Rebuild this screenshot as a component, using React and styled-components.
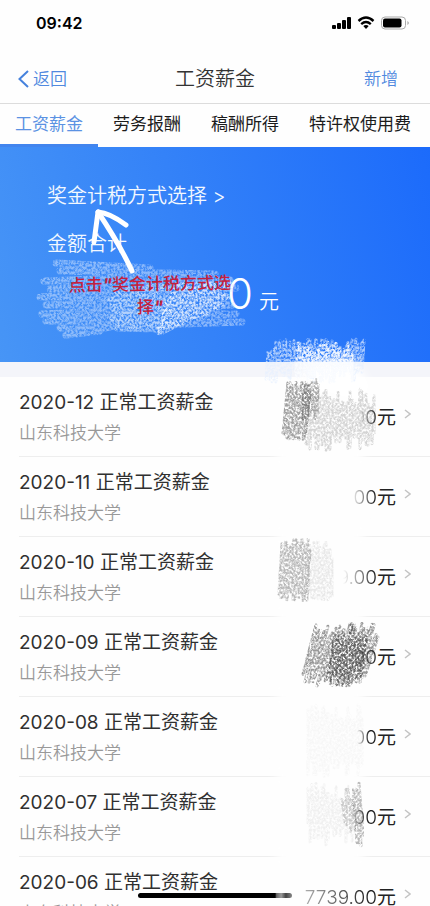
import React from 'react';
import styled, { createGlobalStyle } from 'styled-components';

const GlobalStyle = createGlobalStyle`
  * {
    box-sizing: border-box;
  }

  body {
    margin: 0;
    background: #fefefe;
    color: #333;
    font-family: Inter, 'Noto Sans CJK SC', sans-serif;
  }

  button {
    padding: 0;
    border: 0;
    background: none;
    color: inherit;
    font: inherit;
    cursor: pointer;
  }
`;

const Page = styled.div`
  position: relative;
  display: flex;
  flex-direction: column;
  height: 100vh;
  overflow: hidden;
`;

/* Top bars */
const StatusBar = styled.div`
  display: flex;
  flex: none;
  align-items: center;
  justify-content: space-between;
  height: 46px;
  padding: 0 20px 0 36px;
  color: #000;
  font-size: 16px;
  font-weight: 600;

  svg {
    display: block;
  }
`;

const NavBar = styled.header`
  display: grid;
  flex: none;
  grid-template-columns: 1fr auto 1fr;
  align-items: center;
  height: 58px;
  padding: 8px 18px 0;
  border-bottom: 1px solid #dcdcdc;

  h1 {
    margin: 0;
    font-size: 20px;
    font-weight: 350;
    line-height: 24px;
  }
`;

const NavButton = styled.button`
  display: flex;
  align-items: center;
  gap: 4px;
  justify-self: ${({ $end }) => ($end ? 'end' : 'start')};
  margin-right: ${({ $end }) => ($end ? '14px' : '0')};
  color: #5089df;
  font-size: 17px;
  font-weight: 350;
  line-height: 24px;
`;

const Tabs = styled.nav`
  display: flex;
  flex: none;
  height: 43px;
`;

const Tab = styled.button`
  flex: none;
  padding: 0 15px;
  border-bottom: 3px solid ${({ $active }) => ($active ? '#4285ee' : 'transparent')};
  color: ${({ $active }) => ($active ? '#5b92e3' : '#1c1c1c')};
  font-size: 17px;
  line-height: 40px;
`;

const Content = styled.main`
  flex: 1;
  min-height: 0;
  overflow-y: auto;
  scrollbar-width: none;
`;

/* Banner */
const Banner = styled.section`
  position: relative;
  height: 215px;
  padding: 37px 47px 0;
  background: linear-gradient(75deg, #4795f6 0%, #3482f8 45%, #1c6bfb 100%);
  color: #f2f8ff;
  font-size: 20px;
  font-weight: 350;
  line-height: 24px;
`;

const MethodButton = styled.button`
  display: block;
`;

const TotalLabel = styled.div`
  margin-top: 24px;
`;

const Total = styled.div`
  display: flex;
  align-items: baseline;
  gap: 6px;
  padding-left: 180px;
  margin-top: 14px;
  color: #fff;
  line-height: 48px;

  strong {
    font-size: 42px;
    font-weight: 350;
  }
`;

const Note = styled.p`
  position: absolute;
  top: 126px;
  left: 60px;
  width: 180px;
  margin: 0;
  color: #c41f3e;
  font-size: 17px;
  font-weight: 500;
  line-height: 23px;
  text-align: center;
  transform: rotate(-1deg);

  i {
    font-weight: 700;
  }
`;

const BannerDrawing = styled.svg`
  position: absolute;
  top: 0;
  left: 0;
  width: 300px;
  height: 215px;
`;

/* List */
const List = styled.ul`
  margin: 0;
  padding: 0;
  border-top: 15px solid #f4f5fa;
  list-style: none;
`;

const Row = styled.li`
  position: relative;
  height: 80px;
  padding: 0 19px;

  &::after {
    content: '';
    display: block;
    height: 1px;
    margin-right: -19px;
    background: #eee;
  }
`;

const RowLink = styled.a`
  display: flex;
  align-items: center;
  justify-content: space-between;
  height: 79px;
  padding-top: 2px;
  color: inherit;
  text-decoration: none;
`;

const RowTitle = styled.div`
  color: #303030;
  font-size: 19px;
  line-height: 30px;
`;

const Employer = styled.div`
  color: #999;
  font-size: 17px;
  font-weight: 350;
  line-height: 30px;
`;

const Amount = styled.div`
  position: relative;
  z-index: 1;
  display: flex;
  align-items: center;
  gap: 8px;
  color: #222;
  font-size: 19px;
  line-height: 24px;

  svg {
    margin-bottom: 8px;
  }
`;

const Digits = styled.span`
  font-weight: 300;
  mask-image: linear-gradient(
    to left,
    #000 ${({ $solid }) => $solid}px,
    transparent ${({ $clear }) => $clear}px
  );
`;

const RowDrawing = styled.svg`
  position: absolute;
  top: 0;
  right: 0;
  width: 170px;
  height: 80px;
  overflow: visible;
  pointer-events: none;
`;

const HomeIndicator = styled.div`
  position: absolute;
  bottom: 8px;
  left: 50%;
  z-index: 2;
  width: 154px;
  height: 5px;
  border-radius: 3px;
  background: linear-gradient(to right, #000 89%, #666 90%, #999 93%, #444 96%, #888);
  transform: translateX(-50%);
`;

// Repeatable noise between -1 and 1
const noise = n => {
  const v = Math.sin(n * 127.1 + 311.7) * 43758.5453;
  return (v - Math.floor(v)) * 2 - 1;
};

// Back and forth pencil line inside a slanted box
const hatch = ({ x0, x1, y0, y1, step = 2, slant = 0, jitter = 6 }) => {
  let d = '';
  let i = 0;
  for (let x = x0; x <= x1; x += step) {
    const a = noise(i + x0) * jitter;
    const b = noise(i * 3 + y1) * jitter;
    d += `${i ? 'L' : 'M'}${x} ${y0 + a} L${x + slant} ${y1 + b} `;
    i += 1;
  }
  return d;
};

const Hatch = ({ color, width = 3, opacity = 1, ...box }) => (
  <path
    d={hatch(box)}
    fill='none'
    stroke={color}
    strokeWidth={width}
    strokeLinecap='round'
    strokeLinejoin='round'
    opacity={opacity}
    filter='url(#grain)'
  />
);

const Filters = () => (
  <svg width='0' height='0' style={{ position: 'absolute' }} aria-hidden='true'>
    <defs>
      <filter id='grain' x='-10%' y='-20%' width='120%' height='140%'>
        <feTurbulence type='fractalNoise' baseFrequency='0.5 0.4' numOctaves='4' seed='4' result='noise' />
        <feColorMatrix in='noise' values='0 0 0 0 0  0 0 0 0 0  0 0 0 0 0  0 3 0 0 -0.9' result='holes' />
        <feComposite in='SourceGraphic' in2='holes' operator='in' />
        <feGaussianBlur stdDeviation='0.6' />
      </filter>
      <filter id='soft' x='-30%' y='-60%' width='160%' height='220%'>
        <feGaussianBlur stdDeviation='5' />
      </filter>
    </defs>
  </svg>
);

const records = [
  {
    month: '2020-12',
    digits: '00',
    solid: 0,
    clear: 18,
    marks: (
      <>
        <path d='M42 -14 L94 -18 L110 10 L100 24 L52 10Z' fill='#fff' filter='url(#soft)' />
        <Hatch x0={8} x1={104} y0={-30} y1={-2} slant={-2} jitter={8} color='#e6f0ff' opacity={0.7} />
        <Hatch x0={36} x1={92} y0={-26} y1={8} jitter={9} color='#fff' opacity={0.8} />
        <Hatch x0={28} x1={50} y0={11} y1={57} slant={-5} color='#444' opacity={0.5} />
        <Hatch x0={44} x1={58} y0={8} y1={36} slant={-1} color='#555' opacity={0.45} />
        <Hatch x0={46} x1={114} y0={22} y1={64} jitter={10} color='#888' opacity={0.35} />
      </>
    )
  },
  { month: '2020-11', digits: '00', solid: 2, clear: 26 },
  {
    month: '2020-10',
    digits: '9.00',
    solid: 2,
    clear: 34,
    marks: (
      <>
        <Hatch x0={22} x1={50} y0={8} y1={58} slant={-3} color='#777' opacity={0.5} />
        <Hatch x0={46} x1={72} y0={14} y1={54} jitter={10} color='#aaa' opacity={0.25} />
      </>
    )
  },
  {
    month: '2020-09',
    digits: '00',
    solid: 0,
    clear: 34,
    marks: (
      <>
        <Hatch x0={56} x1={118} y0={14} y1={62} slant={-13} jitter={7} color='#555' opacity={0.6} />
        <Hatch x0={76} x1={108} y0={16} y1={60} slant={-8} jitter={10} color='#222' opacity={0.45} />
      </>
    )
  },
  {
    month: '2020-08',
    digits: '00',
    solid: 8,
    clear: 20,
    marks: <Hatch x0={48} x1={102} y0={18} y1={70} jitter={10} color='#ccc' opacity={0.12} />
  },
  {
    month: '2020-07',
    digits: '00',
    solid: 10,
    clear: 26,
    marks: (
      <>
        <Hatch x0={48} x1={92} y0={18} y1={56} jitter={12} color='#bbb' opacity={0.2} />
        <Hatch x0={82} x1={92} y0={18} y1={50} slant={3} color='#999' opacity={0.45} />
        <Hatch x0={93} x1={99} y0={10} y1={64} slant={4} color='#666' opacity={0.45} />
      </>
    )
  },
  { month: '2020-06', digits: '7739.00', solid: 8, clear: 110 }
];

const tabs = ['工资薪金', '劳务报酬', '稿酬所得', '特许权使用费'];

const App = () => (
  <Page>
    <GlobalStyle />
    <Filters />
    <StatusBar>
      <span>09:42</span>
      <svg width='78' height='16' viewBox='0 0 78 16' aria-hidden='true'>
        <rect x='0' y='10' width='4' height='4' rx='1' />
        <rect x='5' y='8' width='4' height='6' rx='1' />
        <rect x='10' y='5' width='4' height='9' rx='1' />
        <rect x='15' y='2' width='4' height='12' rx='1' />
        <g fill='none' stroke='#000' strokeWidth='2.4'>
          <path d='M26.5 6 Q34 -.8 41.5 6' />
          <path d='M29.2 9.2 Q34 5 38.8 9.2' />
        </g>
        <path d='M31.3 11 Q34 8.8 36.7 11 L34 14Z' />
        <rect x='49.5' y='2' width='24' height='12' rx='3.5' fill='none' stroke='#aaa' />
        <rect x='51' y='3.5' width='18.5' height='9' rx='2' />
        <path d='M75.5 6 Q78 8 75.5 10Z' fill='#999' />
      </svg>
    </StatusBar>

    <NavBar>
      <NavButton>
        <svg width='11' height='18' viewBox='0 0 11 18' fill='none' stroke='#4682dd' strokeWidth='2'>
          <path d='M10 1 L1.5 9 L10 17' />
        </svg>
        返回
      </NavButton>
      <h1>工资薪金</h1>
      <NavButton $end>新增</NavButton>
    </NavBar>

    <Tabs>
      {tabs.map((tab, i) => (
        <Tab key={tab} $active={i === 0}>
          {tab}
        </Tab>
      ))}
    </Tabs>

    <Content>
      <Banner>
        <MethodButton>奖金计税方式选择 &gt;</MethodButton>
        <TotalLabel>金额合计</TotalLabel>
        <Total>
          <strong>0</strong>
          <span>元</span>
        </Total>
        <BannerDrawing viewBox='0 0 300 215' aria-hidden='true'>
          <g fill='none' stroke='#cfe2fd' strokeLinecap='round' strokeLinejoin='round' filter='url(#grain)'>
            <path
              d='M56 116 L150 121 L60 124 L215 127 L44 134 L230 133 L50 142 L236 141 L40 150 L225 149 L46 158 L232 158 L42 167 L236 167 L46 174 L242 175 L60 181 L110 180 L66 188 L100 184'
              strokeWidth='7'
              opacity='.55'
            />
            <path
              d='M118 146 L170 140 L112 154 L168 152 L116 162 L166 163 L114 172 L165 172 L118 180 L160 181'
              strokeWidth='9'
              opacity='.6'
            />
            <path
              d='M176 140 L228 138 L174 149 L226 150 L168 158 L220 158 L166 166 L206 164 L164 176 L192 168 L160 184'
              stroke='#fff'
              strokeWidth='9'
              opacity='.6'
            />
          </g>
          <g fill='none' stroke='#fff' strokeLinecap='round' strokeLinejoin='round'>
            <path d='M132 124 Q120 98 98 65' strokeWidth='5' />
            <path d='M94 95 L96 80 L98 65 Q110 66 126 78' strokeWidth='5' />
          </g>
        </BannerDrawing>
        <Note>
          点击<i>"</i>奖金计税方式选
          <br />
          择<i>"</i>
        </Note>
      </Banner>

      <List>
        {records.map(({ month, digits, solid, clear, marks }) => (
          <Row key={month}>
            <RowLink href='#'>
              <div>
                <RowTitle>{month} 正常工资薪金</RowTitle>
                <Employer>山东科技大学</Employer>
              </div>
              <Amount>
                <span>
                  <Digits $solid={solid} $clear={clear}>
                    {digits}
                  </Digits>
                  元
                </span>
                <svg width='7' height='10' viewBox='0 0 7 10' fill='none' stroke='#c4c4c4' strokeWidth='1.5'>
                  <path d='M1 1 L6 5 L1 9' />
                </svg>
              </Amount>
            </RowLink>
            <RowDrawing viewBox='0 0 170 80' aria-hidden='true'>
              <rect x='16' y='68' width='88' height='20' fill='#fefefe' filter='url(#soft)' />
              {marks}
            </RowDrawing>
          </Row>
        ))}
      </List>
    </Content>
    <HomeIndicator />
  </Page>
);

export default App;
